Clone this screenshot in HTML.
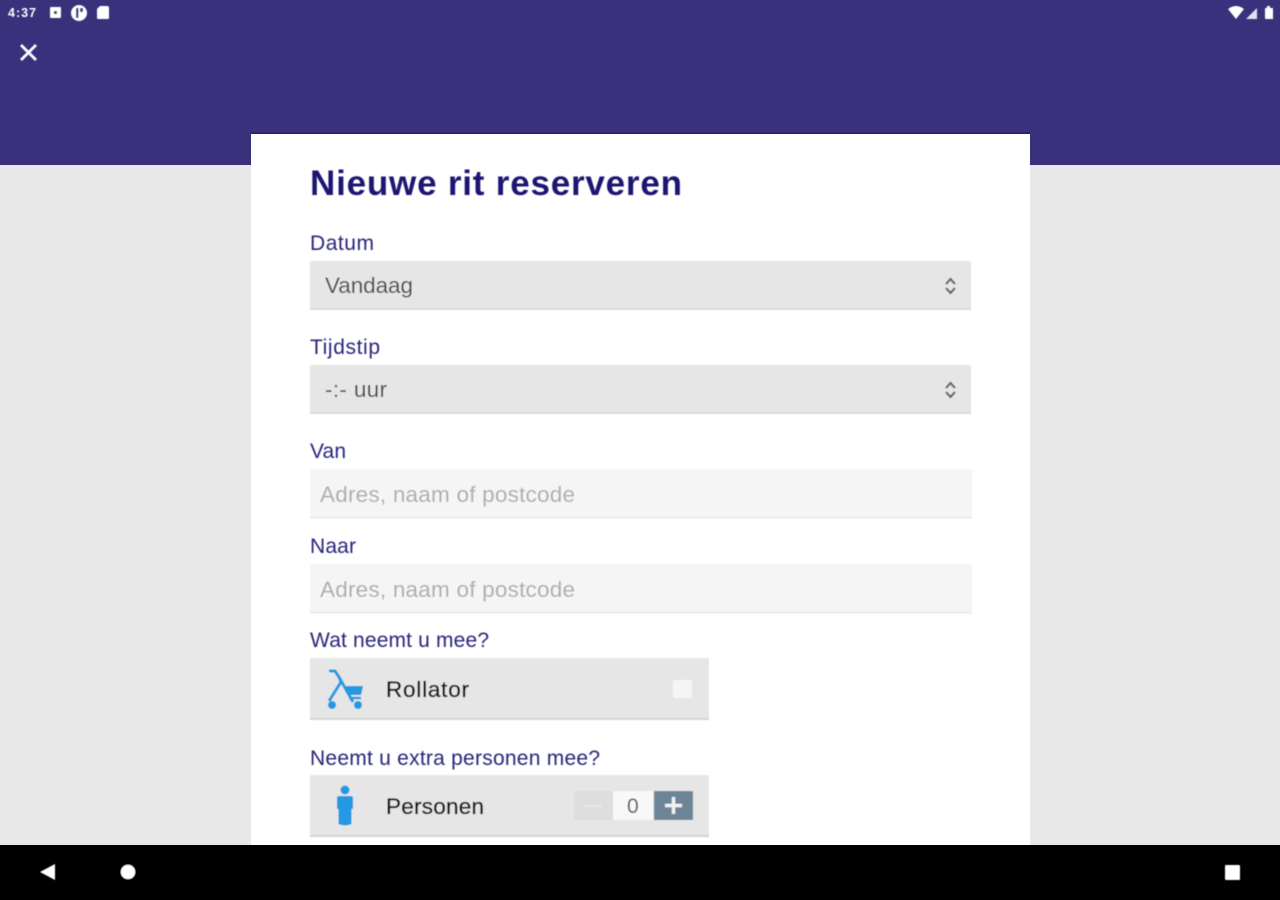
<!DOCTYPE html>
<html><head><meta charset="utf-8"><title>Nieuwe rit reserveren</title>
<style>
html,body{margin:0;padding:0;width:1280px;height:900px;overflow:hidden;background:#e8e8e8}
svg{display:block}
text{font-family:"Liberation Sans",sans-serif}
.l{font-size:21px;fill:#29257a}
.v{font-size:22.5px;fill:#4a4a4a}
.p{font-size:22.5px;fill:#adadad}
.b{font-size:22.5px;fill:#111;stroke:#111;stroke-width:.35px}
.soft{filter:url(#s)}
</style></head><body>
<svg width="1280" height="900" viewBox="0 0 1280 900" xmlns="http://www.w3.org/2000/svg">
<defs>
<filter id="s" x="-5%" y="-5%" width="110%" height="110%"><feGaussianBlur stdDeviation="0.6"/></filter>
</defs>
<rect width="1280" height="900" fill="#e8e8e8"/>
<rect width="1280" height="165" fill="#3a317c"/>
<rect x="251" y="132.500" width="779" height="2" fill="#241c78"/>
<rect x="251" y="134" width="779" height="711" fill="#fff"/>

<g class="soft">
<text x="8" y="17" font-size="12.5" font-weight="bold" fill="#fff" textLength="28">4:37</text>
<rect x="50" y="7" width="11" height="11" rx="1" fill="#fff"/><rect x="54" y="11" width="3" height="3" fill="#3a317c"/>
<circle cx="79" cy="13" r="8" fill="#fff"/><rect x="76" y="8" width="2.400" height="10" fill="#3a317c"/><rect x="80" y="8" width="3" height="4" fill="#3a317c"/>
<path d="M100 6h7a2 2 0 0 1 2 2v10a1 1 0 0 1-1 1H98a1 1 0 0 1-1-1V9z" fill="#fff"/>
<path d="M21 45l15 15M36 45L21 60" stroke="#fff" stroke-width="2.800" fill="none"/>
<path d="M1228 9q8-6 16 0l-8 10z" fill="#fff"/>
<path d="M1257 8v11h-11z" fill="#fff" opacity=".85"/>
<path d="M1265 8h2V6h3v2h3v11h-8z" fill="#fff"/>

<text x="310" y="195" font-size="35" font-weight="bold" fill="#1b1672" textLength="372">Nieuwe rit reserveren</text>

<text class="l" x="310" y="250" textLength="64">Datum</text>
<rect x="310" y="261" width="661" height="47" fill="#e6e6e6"/><rect x="310" y="308" width="661" height="2" fill="#dadada"/>
<text class="v" x="325" y="293" textLength="88">Vandaag</text>
<path d="M946 284l4.500-5 4.500 5M946 288l4.500 5 4.500-5" stroke="#666" stroke-width="2.200" fill="none"/>

<text class="l" x="310" y="354" textLength="70">Tijdstip</text>
<rect x="310" y="365" width="661" height="47" fill="#e6e6e6"/><rect x="310" y="412" width="661" height="2" fill="#dadada"/>
<text class="v" x="325" y="397" textLength="62">-:- uur</text>
<path d="M946 388l4.500-5 4.500 5M946 392l4.500 5 4.500-5" stroke="#666" stroke-width="2.200" fill="none"/>

<text class="l" x="310" y="458" textLength="36">Van</text>
<rect x="310" y="469" width="662" height="48" fill="#f5f5f5"/><rect x="310" y="517" width="662" height="1.500" fill="#e8e8e8"/>
<text class="p" x="320" y="502" textLength="255">Adres, naam of postcode</text>

<text class="l" x="310" y="553" textLength="46">Naar</text>
<rect x="310" y="564" width="662" height="48" fill="#f5f5f5"/><rect x="310" y="612" width="662" height="1.500" fill="#e8e8e8"/>
<text class="p" x="320" y="597" textLength="255">Adres, naam of postcode</text>

<text class="l" x="310" y="647" textLength="179">Wat neemt u mee?</text>
<rect x="310" y="658" width="399" height="60" fill="#e6e6e6"/><rect x="310" y="718" width="399" height="2" fill="#d4d4d4"/>
<path d="M329 671h6l4 6 14 25M339 677l2 5-12 19" stroke="#2299e2" stroke-width="3" fill="none"/>
<path d="M346 686h17l-2 9h-12z" fill="#2299e2"/><path d="M349 698h12" stroke="#2299e2" stroke-width="2.400"/>
<circle cx="332" cy="705" r="4" fill="#2299e2"/><circle cx="358" cy="705" r="4" fill="#2299e2"/>
<text class="b" x="386" y="697" textLength="83">Rollator</text>
<rect x="673" y="680" width="19" height="18" rx="2" fill="#f5f5f5"/>

<text class="l" x="310" y="765" textLength="290">Neemt u extra personen mee?</text>
<rect x="310" y="775" width="399" height="60" fill="#e6e6e6"/><rect x="310" y="835" width="399" height="2" fill="#d4d4d4"/>
<circle cx="345" cy="790" r="4.500" fill="#2299e2"/>
<path d="M339 796h12a2 2 0 0 1 2 2v11h-1.500v15q-6.500 3-13 0v-15h-1.500v-11a2 2 0 0 1 2-2z" fill="#2299e2"/>
<text class="b" x="386" y="814" textLength="98">Personen</text>
<rect x="574" y="791" width="39" height="29" fill="#dedede"/><rect x="585" y="805" width="17" height="2" fill="#e8e8e8"/>
<rect x="613" y="791" width="40" height="29" fill="#f8f8f8"/>
<text x="627" y="813" font-size="21" fill="#555" textLength="13">0</text>
<rect x="654" y="791" width="39" height="29" fill="#6d8697"/>
<path d="M665 805.500h17M673.500 797v17" stroke="#f2f2f2" stroke-width="3.400" fill="none"/>
</g>

<rect y="845" width="1280" height="55" fill="#000"/>
<g class="soft">
<path d="M40 872l15-8v16z" fill="#fff"/>
<circle cx="128" cy="872" r="7.500" fill="#fff"/>
<rect x="1225" y="865" width="15" height="15" rx="1" fill="#fff"/>
</g>
</svg>
</body></html>
